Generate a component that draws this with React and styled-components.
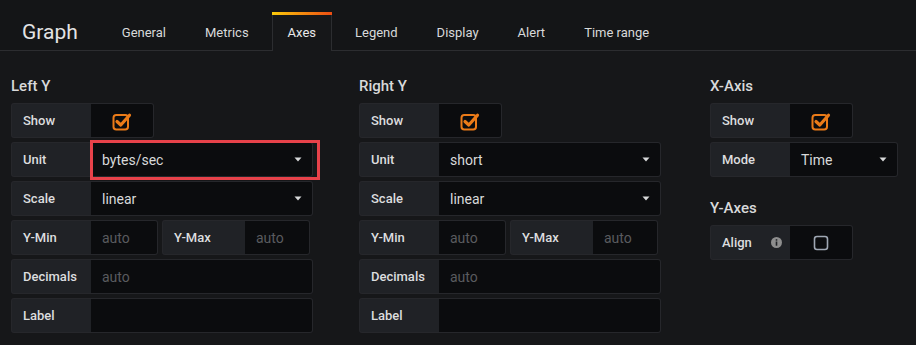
import React from 'react'
import styled, { createGlobalStyle } from 'styled-components'

const GlobalStyle = createGlobalStyle`
  html, body {
    margin: 0;
    padding: 0;
    background: #161719;
  }
  body {
    font-family: Roboto, "Noto Sans", "Liberation Sans", sans-serif;
    color: #d8d9da;
  }
`;

const tabs = ['General', 'Metrics', 'Axes', 'Legend', 'Display', 'Alert', 'Time range'];

const CheckedIcon = () => (
  <svg width="21" height="20" viewBox="0 0 21 20">
    <rect x="1.5" y="4" width="14.5" height="14.5" rx="2.8" fill="none" stroke="#eb7b18" strokeWidth="2" />
    <path d="M5 10.5 L8.8 14 L17.5 4.2" fill="none" stroke="#eb7b18" strokeWidth="3.2" strokeLinecap="round" strokeLinejoin="round" />
  </svg>
);

const EmptyIcon = () => (
  <svg width="16" height="16" viewBox="0 0 16 16">
    <rect x="1.5" y="1.5" width="13" height="13" rx="2.5" fill="none" stroke="#9fa7b3" strokeWidth="1.6" />
  </svg>
);

const InfoIcon = () => (
  <svg width="11" height="11" viewBox="0 0 11 11">
    <circle cx="5.5" cy="5.5" r="5.5" fill="#8e8e8e" />
    <rect x="4.7" y="4.5" width="1.6" height="4.2" fill="#202226" />
    <rect x="4.7" y="2.2" width="1.6" height="1.5" fill="#202226" />
  </svg>
);

const Caret = () => (
  <svg width="8" height="5" viewBox="0 0 8 5">
    <path d="M0.5 0.5 L7.5 0.5 L4 4.5 Z" fill="#d8d9da" />
  </svg>
);

const App = () => {
  return (
    <Page>
      <GlobalStyle />
      <NavBar>
        <Title>Graph</Title>
        {tabs.map((t) => (
          <Tab key={t} active={t === 'Axes'}>{t}</Tab>
        ))}
      </NavBar>

      <Content>
        <Section width={348}>
          <Heading>Left Y</Heading>
          <Row>
            <Label>Show</Label>
            <Value width={63} center><CheckedIcon /></Value>
          </Row>
          <Row>
            <Label>Unit</Label>
            <Value width={222}>bytes/sec<CaretBox><Caret /></CaretBox></Value>
            <Highlight />
          </Row>
          <Row>
            <Label>Scale</Label>
            <Value width={222}>linear<CaretBox><Caret /></CaretBox></Value>
          </Row>
          <Row>
            <Group>
              <Label>Y-Min</Label>
              <Value width={67} muted>auto</Value>
            </Group>
            <Group>
              <Label width={83}>Y-Max</Label>
              <Value width={65} muted>auto</Value>
            </Group>
          </Row>
          <Row>
            <Label>Decimals</Label>
            <Value width={222} muted>auto</Value>
          </Row>
          <Row>
            <Label>Label</Label>
            <Value width={222} />
          </Row>
        </Section>

        <Section width={348}>
          <Heading>Right Y</Heading>
          <Row>
            <Label>Show</Label>
            <Value width={63} center><CheckedIcon /></Value>
          </Row>
          <Row>
            <Label>Unit</Label>
            <Value width={222}>short<CaretBox><Caret /></CaretBox></Value>
          </Row>
          <Row>
            <Label>Scale</Label>
            <Value width={222}>linear<CaretBox><Caret /></CaretBox></Value>
          </Row>
          <Row>
            <Group>
              <Label>Y-Min</Label>
              <Value width={67} muted>auto</Value>
            </Group>
            <Group>
              <Label width={83}>Y-Max</Label>
              <Value width={65} muted>auto</Value>
            </Group>
          </Row>
          <Row>
            <Label>Decimals</Label>
            <Value width={222} muted>auto</Value>
          </Row>
          <Row>
            <Label>Label</Label>
            <Value width={222} />
          </Row>
        </Section>

        <Section width={200} offset={3}>
          <Heading>X-Axis</Heading>
          <Row>
            <Label>Show</Label>
            <Value width={63} center><CheckedIcon /></Value>
          </Row>
          <Row>
            <Label>Mode</Label>
            <Value width={108}>Time<CaretBox><Caret /></CaretBox></Value>
          </Row>
          <Heading spaced>Y-Axes</Heading>
          <Row>
            <Label>Align<InfoBox><InfoIcon /></InfoBox></Label>
            <Value width={63} center><EmptyIcon /></Value>
          </Row>
        </Section>
      </Content>
    </Page>
  );
}

const Page = styled.div`
  width: 916px;
  height: 345px;
  background: #161719;
  overflow: hidden;
`;

const NavBar = styled.div`
  display: flex;
  align-items: flex-end;
  height: 50px;
  padding-left: 22px;
  border-bottom: 1px solid #2c2d30;
  background: #141517;
`;

const Title = styled.div`
  align-self: center;
  margin-top: 13px;
  margin-right: 28px;
  font-size: 21px;
  color: #e3e3e4;
`;

const Tab = styled.div`
  height: 38px;
  line-height: 39px;
  padding: 0 15px;
  margin-right: 7px;
  font-size: 13px;
  color: #d8d9da;
  box-sizing: border-box;
  border: 1px solid transparent;
  border-bottom: none;
  ${({ active }) => active && `
    position: relative;
    margin-bottom: -1px;
    height: 39px;
    border-color: #2c2d30;
    background: #161719;
    color: #e9e9ea;
    &::before {
      content: '';
      position: absolute;
      left: -1px;
      right: -1px;
      top: -1px;
      height: 3px;
      background: linear-gradient(90deg, #fbca0a, #ec4d13);
    }
  `}
`;

const Content = styled.div`
  display: flex;
  padding-left: 11px;
`;

const Section = styled.div`
  width: ${({ width }) => width}px;
  margin-left: ${({ offset }) => offset || 0}px;
  display: flex;
  flex-direction: column;
`;

const Heading = styled.div`
  padding-top: ${({ spaced }) => (spaced ? '17px' : '25px')};
  margin-bottom: 7px;
  line-height: 20px;
  font-size: 15px;
  font-weight: 500;
  color: #d8d9da;
`;

const Row = styled.div`
  position: relative;
  display: flex;
  height: 35px;
  margin-bottom: 4px;
`;

const Group = styled.div`
  display: flex;
  margin-right: 4px;
`;

const Label = styled.div`
  display: flex;
  align-items: center;
  justify-content: space-between;
  box-sizing: border-box;
  width: ${({ width }) => width || 80}px;
  padding: 0 10px 0 11px;
  background: #202226;
  border: 1px solid #26272b;
  border-right: none;
  border-radius: 3px 0 0 3px;
  font-size: 13px;
  font-weight: 500;
  color: #dcdddf;
`;

const Value = styled.div`
  position: relative;
  display: flex;
  align-items: center;
  justify-content: ${({ center }) => (center ? 'center' : 'flex-start')};
  box-sizing: border-box;
  width: ${({ width }) => width}px;
  padding-left: ${({ center }) => (center ? '0' : '11px')};
  background: #0b0c0e;
  border: 1px solid #26272b;
  border-left: none;
  border-radius: 0 3px 3px 0;
  font-size: 14px;
  color: ${({ muted }) => (muted ? '#5a5b5f' : '#d8d9da')};
`;

const CaretBox = styled.span`
  position: absolute;
  right: 10px;
  top: 50%;
  margin-top: -3px;
  display: flex;
`;

const InfoBox = styled.span`
  display: flex;
  margin-right: -2px;
`;

const Highlight = styled.div`
  position: absolute;
  left: 79px;
  top: -2px;
  width: 230px;
  height: 40px;
  box-sizing: border-box;
  border: 3px solid #e8424a;
  pointer-events: none;
`;

export default App
